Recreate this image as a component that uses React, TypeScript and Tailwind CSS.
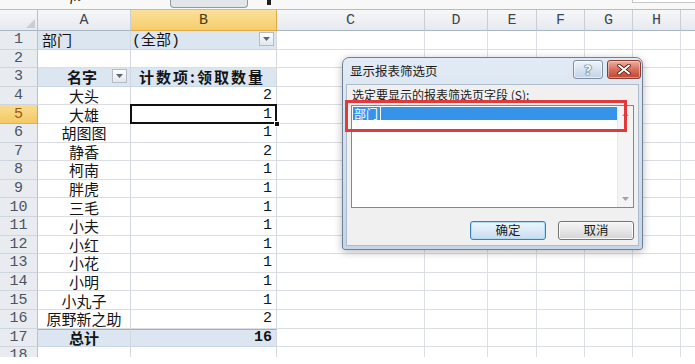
import React from 'react';

type RowData = { n: number; a?: string; b?: string; kind?: 'filter' | 'header' | 'total' };

const rows: RowData[] = [
  { n: 1, a: '部门', b: '(全部)', kind: 'filter' },
  { n: 2 },
  { n: 3, a: '名字', b: '计数项:领取数量', kind: 'header' },
  { n: 4, a: '大头', b: '2' },
  { n: 5, a: '大雄', b: '1' },
  { n: 6, a: '胡图图', b: '1' },
  { n: 7, a: '静香', b: '2' },
  { n: 8, a: '柯南', b: '1' },
  { n: 9, a: '胖虎', b: '1' },
  { n: 10, a: '三毛', b: '1' },
  { n: 11, a: '小夫', b: '1' },
  { n: 12, a: '小红', b: '1' },
  { n: 13, a: '小花', b: '1' },
  { n: 14, a: '小明', b: '1' },
  { n: 15, a: '小丸子', b: '1' },
  { n: 16, a: '原野新之助', b: '2' },
  { n: 17, a: '总计', b: '16', kind: 'total' },
  { n: 18 },
];

const restCols = [
  { l: 'C', w: 'w-[148px]' },
  { l: 'D', w: 'w-[63px]' },
  { l: 'E', w: 'w-[49px]' },
  { l: 'F', w: 'w-[48px]' },
  { l: 'G', w: 'w-[48px]' },
  { l: 'H', w: 'w-[48px]' },
];

const cjk = "font-['Noto_Sans_CJK_SC',sans-serif]";
const mono = "font-['Liberation_Mono',monospace]";

function DropBtn() {
  return (
    <div className="w-[15px] h-[14px] border border-[#b3bcc8] bg-gradient-to-b from-white to-[#e2e6ec] flex items-center justify-center">
      <svg width="7" height="4" viewBox="0 0 7 4">
        <path d="M0 0 L7 0 L3.5 4 Z" fill="#5c6573" />
      </svg>
    </div>
  );
}

function Row({ r }: { r: RowData }) {
  const sel = r.n === 5;
  const filled = r.kind === 'filter' || r.kind === 'header' || r.kind === 'total';
  const fillCls = filled ? 'bg-[#dce6f1] border-b-[#c9d6e6]' : 'bg-white border-b-[#dadde2]';
  const totalCls = r.kind === 'total' ? 'border-t border-t-[#95b3d7] font-bold' : '';
  const headCls = r.kind === 'header' ? 'font-bold' : '';
  return (
    <div className="flex h-[18.6px] shrink-0">
      <div
        className={`w-[38px] shrink-0 flex items-center justify-center border-r border-b text-[15px] leading-none ${mono} ${
          sel
            ? 'bg-gradient-to-b from-[#f9dc92] to-[#f4c864] text-[#9a5a10] border-r-[#d9a445] border-b-[#e0b158]'
            : 'bg-[#e8ecf1] text-[#4a5563] border-r-[#b7c2cf] border-b-[#cfd5dd]'
        }`}
      >
        {r.n}
      </div>
      <div
        className={`relative w-[93px] shrink-0 flex items-center justify-center border-r border-b border-r-[#d3d8df] text-[15px] leading-none text-[#141414] ${cjk} ${fillCls} ${totalCls} ${headCls} ${
          r.kind === 'filter' ? 'justify-start pl-[4px]' : ''
        }`}
      >
        <span className={r.kind === 'header' ? 'mr-[4px]' : ''}>{r.a}</span>
        {r.kind === 'header' && (
          <div className="absolute right-[3px] top-[1px]">
            <DropBtn />
          </div>
        )}
      </div>
      <div
        className={`relative w-[146px] shrink-0 flex items-center border-r border-b border-r-[#d3d8df] text-[15px] leading-none text-[#141414] ${fillCls} ${totalCls} ${headCls} ${
          r.kind === 'filter'
            ? `justify-start pl-[1px] ${cjk}`
            : r.kind === 'header'
            ? `justify-start pl-[8px] tracking-[2px] ${cjk}`
            : `justify-end pr-[4px] ${mono}`
        }`}
      >
        {r.kind === 'filter' ? (
          <span>
            <span className={mono}>(</span>全部<span className={mono}>)</span>
          </span>
        ) : (
          <span>{r.b}</span>
        )}
        {r.kind === 'filter' && (
          <div className="absolute right-[2px] top-[1px]">
            <DropBtn />
          </div>
        )}
        {sel && (
          <>
            <div className="absolute -left-[1px] -top-[1px] right-[-1px] bottom-[-1px] border-2 border-[#111] z-10" />
            <div className="absolute right-[-4px] bottom-[-4px] w-[6px] h-[6px] bg-[#111] border border-white z-20" />
          </>
        )}
      </div>
      {restCols.map((c) => (
        <div key={c.l} className={`${c.w} shrink-0 border-r border-b border-r-[#dcdfe3] border-b-[#dadde2]`} />
      ))}
      <div className="flex-1 border-b border-[#dadde2]" />
    </div>
  );
}

function Dialog() {
  return (
    <div className="absolute left-[342px] top-[57px] w-[301px] h-[193px] rounded-t-[7px] rounded-b-[3px] border border-[#6f8198] bg-gradient-to-b from-[#e2ebf5] via-[#d2dfee] to-[#c5d6ea] shadow-[0_2px_8px_rgba(0,0,0,0.28)] flex flex-col z-30">
      <div className="h-[26px] shrink-0 flex items-start">
        <span className={`ml-[7px] mt-[7px] text-[12.5px] leading-none text-[#1b1b1b] ${cjk}`}>显示报表筛选页</span>
        <div className="ml-auto mt-[2px] mr-[1px] flex gap-[4px]">
          <div className="w-[30px] h-[19px] rounded-[3px] border border-[#7c8da4] bg-gradient-to-b from-[#f1f5fa] via-[#d9e3ef] to-[#c3d2e4] flex items-center justify-center shadow-[inset_0_0_0_1px_rgba(255,255,255,0.6)]">
            <span className="text-[14px] leading-none font-bold text-[#eef3f9] font-['DejaVu_Sans',sans-serif] [text-shadow:0_0_1px_#44546a,0_0_1px_#44546a,0_0_1px_#44546a]">?</span>
          </div>
          <div className="w-[34px] h-[19px] rounded-[3px] border border-[#8a3b30] bg-gradient-to-b from-[#eab1a4] via-[#d7705d] to-[#c2432f] flex items-center justify-center shadow-[inset_0_0_0_1px_rgba(255,220,210,0.5)]">
            <svg width="14" height="11" viewBox="0 0 14 11">
              <path d="M2 1.5 L12 9.5 M12 1.5 L2 9.5" stroke="#5a1d14" strokeWidth="3.6" strokeLinecap="round" />
              <path d="M2 1.5 L12 9.5 M12 1.5 L2 9.5" stroke="#ffffff" strokeWidth="2" strokeLinecap="round" />
            </svg>
          </div>
        </div>
      </div>
      <div className="flex-1 mx-[3px] mb-[3px] bg-[#f0f0f0] border border-[#aebbcb] flex flex-col px-[4px]">
        <div className={`h-[20px] shrink-0 flex items-center pl-[1px] text-[12px] leading-none text-[#1b1b1b] ${cjk}`}>
          选定要显示的报表筛选页字段 (S):
        </div>
        <div className="h-[103px] shrink-0 border border-[#828790] bg-white flex">
          <div className="flex-1 pl-[1px] pt-[1px]">
            <div className={`h-[13px] bg-[#3594ea] text-white text-[12px] leading-[13px] pl-[1px] flex items-center ${cjk}`}>
              <span>部门</span>
              <span className="ml-[2px] w-[1px] h-[13px] bg-white" />
            </div>
          </div>
          <div className="w-[16px] shrink-0 bg-[#f4f4f4] border-l border-[#e9e9e9] flex flex-col items-center justify-between py-[6px]">
            <svg width="7" height="4" viewBox="0 0 7 4">
              <path d="M0 4 L7 4 L3.5 0 Z" fill="#a3a3a3" />
            </svg>
            <svg width="7" height="4" viewBox="0 0 7 4">
              <path d="M0 0 L7 0 L3.5 4 Z" fill="#a3a3a3" />
            </svg>
          </div>
        </div>
        <div className="mt-[13px] flex justify-end gap-[12px]">
          <div className={`w-[76px] h-[19px] rounded-[3px] border border-[#3c7fb1] bg-gradient-to-b from-[#eef6fc] via-[#dbeaf6] to-[#c6dcee] shadow-[inset_0_0_0_1px_#b4dbf5] flex items-center justify-center text-[12.5px] leading-none text-[#1b1b1b] ${cjk}`}>
            确定
          </div>
          <div className={`w-[76px] h-[19px] rounded-[3px] border border-[#737373] bg-gradient-to-b from-[#f5f5f5] via-[#e6e6e6] to-[#d4d4d4] shadow-[inset_0_0_0_1px_#fbfbfb] flex items-center justify-center text-[12.5px] leading-none text-[#1b1b1b] ${cjk}`}>
            取消
          </div>
        </div>
      </div>
    </div>
  );
}

export default function App() {
  return (
    <div className="relative w-[695px] h-[364px] overflow-hidden bg-white">
      {/* top strip: bottom of formula bar */}
      <div className="h-[10px] flex items-start border-b border-[#b4bcc6] bg-[#f8f8f8]">
        <div className="ml-[70px] w-[14px] h-[4px] overflow-hidden">
          <div className="-mt-[11px] text-[15px] italic leading-none font-['Liberation_Serif',serif] text-[#222]">fx</div>
        </div>
        <div className="ml-[86px] w-[78px] h-[8px] rounded-b-[4px] border border-t-0 border-[#8e99a7] bg-[#e2e6eb]" />
        <div className="ml-[19px] w-[4px] h-[5px] bg-[#1f1f1f]" />
        <div className="ml-auto w-[63px] h-[3px] border-l border-b border-[#c6c6c6] bg-white" />
      </div>

      {/* sheet */}
      <div className="h-[347px] overflow-hidden flex flex-col">
        {/* column header */}
        <div className={`flex h-[21px] shrink-0 text-[15px] leading-none ${mono}`}>
          <div className="w-[38px] shrink-0 border-r border-b border-r-[#b7c2cf] border-b-[#a9b6c6] bg-gradient-to-b from-[#f6f7f9] to-[#e6e9ee] flex items-end justify-end p-[2px]">
            <svg width="9" height="9" viewBox="0 0 9 9">
              <path d="M9 0 L9 9 L0 9 Z" fill="#c9ced6" />
            </svg>
          </div>
          <div className="w-[93px] shrink-0 border-r border-b border-r-[#c7ced8] border-b-[#a9b6c6] bg-gradient-to-b from-[#f6f7f9] to-[#e6e9ee] flex items-center justify-center text-[#3d4752]">
            A
          </div>
          <div className="w-[146px] shrink-0 border-r border-b border-r-[#dca94b] border-b-[#e0a941] bg-gradient-to-b from-[#fbe09a] to-[#f6cd6c] flex items-center justify-center text-[#4a3a12]">
            B
          </div>
          {restCols.map((c) => (
            <div
              key={c.l}
              className={`${c.w} shrink-0 border-r border-b border-r-[#c7ced8] border-b-[#a9b6c6] bg-gradient-to-b from-[#f6f7f9] to-[#e6e9ee] flex items-center justify-center text-[#3d4752]`}
            >
              {c.l}
            </div>
          ))}
          <div className="flex-1 border-b border-[#a9b6c6] bg-gradient-to-b from-[#f6f7f9] to-[#e6e9ee]" />
        </div>
        {rows.map((r) => (
          <Row key={r.n} r={r} />
        ))}
      </div>

      <Dialog />

      {/* annotation */}
      <div className="absolute left-[345px] top-[100px] w-[282px] h-[32px] border-[3px] border-[#e3393b] z-40" />
    </div>
  );
}
